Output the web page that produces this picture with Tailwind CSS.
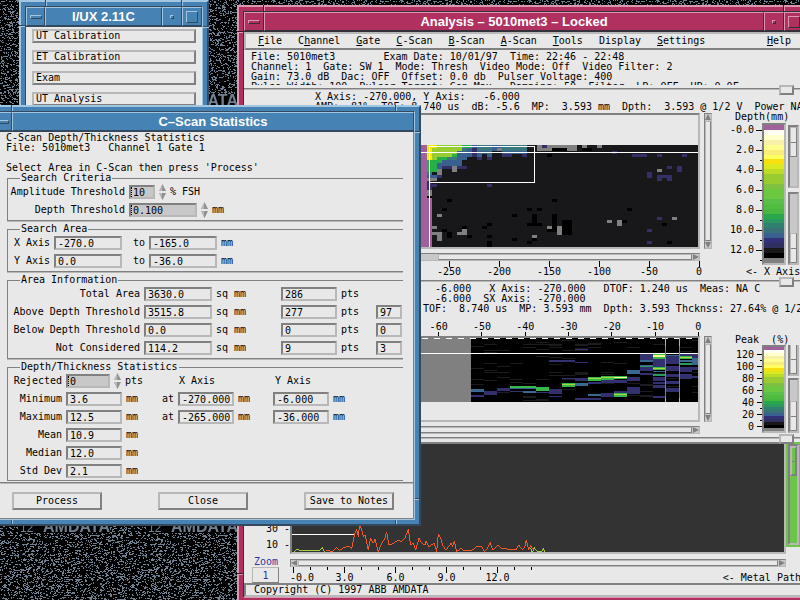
<!DOCTYPE html>
<html lang="en">

<head>
    <meta charset="UTF-8">
    <meta name="viewport" content="width=device-width, initial-scale=1">
    <title>I/UX 2.11C</title>
    <script src="https://cdn.jsdelivr.net/npm/@tailwindcss/browser@4"></script>
</head>

<body class="relative h-screen overflow-hidden bg-black font-['DejaVu_Sans_Mono','Liberation_Mono',monospace] text-[10px] leading-[10px] text-black">
    <!-- Desktop wallpaper -->
    <svg class="absolute inset-0 h-full w-full" shape-rendering="crispEdges" aria-hidden="true">
        <defs>
            <pattern id="wallpaper" y="20" width="128" height="213" patternUnits="userSpaceOnUse">
                <path id="noise" fill="#708090" />
                <text x="20" y="86" fill="#708090" font-family="Liberation Sans" font-size="12">12</text>
                <text x="43" y="86" fill="#708090" font-family="Liberation Sans" font-size="16" font-weight="bold">AMDATA</text>
            </pattern>
        </defs>
        <rect width="100%" height="100%" fill="url(#wallpaper)" />
    </svg>

    <!-- Launcher window -->
    <section class="absolute top-0 left-[19px] w-[190px] border-2 border-t-[#a3c6e0] border-r-[#34495e] border-b-[#34495e] border-l-[#a3c6e0] bg-[#4682b4] p-1">
        <i class="absolute -top-0.5 left-[24px] h-[6px] w-0.5 border-l border-[#34495e] bg-[#a3c6e0]"></i>
        <i class="absolute -top-0.5 right-[24px] h-[6px] w-0.5 border-l border-[#34495e] bg-[#a3c6e0]"></i>
        <i class="absolute top-[23px] -left-0.5 h-0.5 w-[6px] border-t border-[#34495e] bg-[#a3c6e0]"></i>
        <i class="absolute top-[24px] -right-0.5 h-0.5 w-[6px] border-t border-[#34495e] bg-[#a3c6e0]"></i>
        <div class="border border-t-[#34495e] border-r-[#a3c6e0] border-b-[#a3c6e0] border-l-[#34495e]">
            <header class="flex h-5 border-b border-[#34495e] font-['Liberation_Sans',sans-serif] text-[13px] font-bold text-white">
                <button aria-label="Window menu" class="flex w-[19px] items-center justify-center border border-t-[#a3c6e0] border-r-[#34495e] border-b-[#34495e] border-l-[#a3c6e0]">
                    <span class="h-1 w-3 border border-t-[#a3c6e0] border-r-[#34495e] border-b-[#34495e] border-l-[#a3c6e0]"></span>
                </button>
                <h2 class="flex flex-1 items-center justify-center border border-t-[#a3c6e0] border-r-[#34495e] border-b-[#34495e] border-l-[#a3c6e0]">I/UX 2.11C</h2>
                <button aria-label="Minimize" class="flex w-5 items-center justify-center border border-t-[#a3c6e0] border-r-[#34495e] border-b-[#34495e] border-l-[#a3c6e0]">
                    <span class="h-1 w-1 border border-t-[#a3c6e0] border-r-[#34495e] border-b-[#34495e] border-l-[#a3c6e0]"></span>
                </button>
                <button aria-label="Maximize" class="flex w-5 items-center justify-center border border-t-[#a3c6e0] border-r-[#34495e] border-b-[#34495e] border-l-[#a3c6e0]">
                    <span class="h-3 w-3 border border-t-[#a3c6e0] border-r-[#34495e] border-b-[#34495e] border-l-[#a3c6e0]"></span>
                </button>
            </header>
            <div class="flex flex-col gap-[7px] bg-[#e8e8e8] px-1.5 pt-0.5 pb-3">
                <button class="h-[14px] border-2 border-t-[#b8b8b8] border-r-[#808080] border-b-[#808080] border-l-[#b8b8b8] px-0.5 text-left">UT Calibration</button>
                <button class="h-[14px] border-2 border-t-[#b8b8b8] border-r-[#808080] border-b-[#808080] border-l-[#b8b8b8] px-0.5 text-left">ET Calibration</button>
                <button class="h-[14px] border-2 border-t-[#b8b8b8] border-r-[#808080] border-b-[#808080] border-l-[#b8b8b8] px-0.5 text-left">Exam</button>
                <button class="h-[14px] border-2 border-t-[#b8b8b8] border-r-[#808080] border-b-[#808080] border-l-[#b8b8b8] px-0.5 text-left">UT Analysis</button>
            </div>
        </div>
    </section>

    <!-- Analysis window -->
    <section class="absolute top-[5px] -right-[11px] left-[237px] border-2 border-t-[#dc98b0] border-r-[#34303a] border-b-[#34303a] border-l-[#dc98b0] bg-[#b03060] p-1">
        <i class="absolute -top-0.5 left-[24px] h-[6px] w-0.5 border-l border-[#401828] bg-[#dc98b0]"></i>
        <i class="absolute -top-0.5 right-[24px] h-[6px] w-0.5 border-l border-[#401828] bg-[#dc98b0]"></i>
        <i class="absolute top-[24px] -left-0.5 h-0.5 w-[6px] border-t border-[#401828] bg-[#dc98b0]"></i>
        <i class="absolute bottom-[27px] -left-0.5 h-0.5 w-[6px] border-t border-[#401828] bg-[#dc98b0]"></i>
        <div class="border border-t-[#34303a] border-r-[#dc98b0] border-b-[#dc98b0] border-l-[#34303a]">
            <header class="flex h-5 border-b border-[#34303a] font-['Liberation_Sans',sans-serif] text-[13px] font-bold text-white">
                <button aria-label="Window menu" class="flex w-5 items-center justify-center border border-t-[#dc98b0] border-r-[#34303a] border-b-[#34303a] border-l-[#dc98b0]">
                    <span class="h-1 w-3 border border-t-[#dc98b0] border-r-[#34303a] border-b-[#34303a] border-l-[#dc98b0]"></span>
                </button>
                <h2 class="flex flex-1 items-center justify-center border border-t-[#dc98b0] border-r-[#34303a] border-b-[#34303a] border-l-[#dc98b0]">Analysis – 5010met3 – Locked</h2>
                <button aria-label="Minimize" class="flex w-5 items-center justify-center border border-t-[#dc98b0] border-r-[#34303a] border-b-[#34303a] border-l-[#dc98b0]">
                    <span class="h-1 w-1 border border-t-[#dc98b0] border-r-[#34303a] border-b-[#34303a] border-l-[#dc98b0]"></span>
                </button>
                <button aria-label="Maximize" class="flex w-5 items-center justify-center border border-t-[#dc98b0] border-r-[#34303a] border-b-[#34303a] border-l-[#dc98b0]">
                    <span class="h-3 w-3 border border-t-[#dc98b0] border-r-[#34303a] border-b-[#34303a] border-l-[#dc98b0]"></span>
                </button>
            </header>

            <div class="bg-[#e8e8e8]">
                <nav class="flex h-[18px] items-center gap-4 border-2 border-t-[#b8b8b8] border-r-[#808080] border-b-[#808080] border-l-[#b8b8b8] pr-[11px] pl-3">
                    <button><u>F</u>ile</button>
                    <button>C<u>h</u>annel</button>
                    <button><u>G</u>ate</button>
                    <button><u>C</u>-Scan</button>
                    <button><u>B</u>-Scan</button>
                    <button><u>A</u>-Scan</button>
                    <button><u>T</u>ools</button>
                    <button>Display</button>
                    <button><u>S</u>ettings</button>
                    <button class="ml-auto"><u>H</u>elp</button>
                </nav>

                <!-- Exam parameters, the last line is cut by the pane sash -->
                <div class="h-[38px] pt-0.5 pl-[7px]">
                    <pre class="h-[33px] overflow-hidden font-['DejaVu_Sans_Mono','Liberation_Mono',monospace]">File: 5010met3        Exam Date: 10/01/97  Time: 22:46 - 22:48
Channel: 1  Gate: SW 1  Mode: Thresh  Video Mode: Off  Video Filter: 2
Gain: 73.0 dB  Dac: OFF  Offset: 0.0 db  Pulser Voltage: 400
Pulse Width: 100  Pulser Target: Gen Max   Damping: 50  Filter  LP: OFF  HP: 0.0F</pre>
                </div>
                <div class="relative h-0.5 border-t border-[#808080] bg-[#b8b8b8]">
                    <i class="absolute -top-1 right-[10px] h-[10px] w-[15px] border-2 border-t-[#b8b8b8] border-r-[#808080] border-b-[#808080] border-l-[#b8b8b8] bg-[#e8e8e8]"></i>
                </div>

                <!-- C-Scan pane -->
                <div class="h-[190px] pt-0.5">
                    <pre class="h-5 pl-[71px] font-['DejaVu_Sans_Mono','Liberation_Mono',monospace]">X Axis: -270.000, Y Axis:   -6.000
AMP:  81%  TOF: 8.740 us  dB: -5.6  MP:  3.593 mm  Dpth:  3.593 @ 1/2 V  Power NA</pre>
                    <div class="flex">
                        <div class="flex-1 pt-px pl-[44px]">
                            <div class="flex gap-1 pr-3">
                                <div class="h-[136px] flex-1 border-2 border-t-[#808080] border-r-[#b8b8b8] border-b-[#b8b8b8] border-l-[#808080]">
                                    <svg class="h-full w-full" viewBox="290 115 408 132" preserveAspectRatio="none" shape-rendering="crispEdges">
                                        <rect x="290" y="145" width="408" height="102" fill="#18181a" />
                                        <g id="cscan"></g>
                                        <path d="M290 145h137v53h5v49H290z" fill="#a0609c" />
                                        <path d="M290 152.500H698M429.500 247V146.500H534.500V182.500H429" fill="none" stroke="#fff" />
                                    </svg>
                                </div>
                                <div class="flex w-2 flex-col border border-t-[#808080] border-r-[#b8b8b8] border-b-[#b8b8b8] border-l-[#808080] bg-[#c8c8c8]">
                                    <svg class="h-[7px] w-full" viewBox="0 0 6 7"><path d="M3 0L6 6H0z" fill="#808080" /></svg>
                                    <span class="flex-1 border border-t-[#b8b8b8] border-r-[#808080] border-b-[#808080] border-l-[#b8b8b8] bg-[#e8e8e8]"></span>
                                    <svg class="h-[7px] w-full" viewBox="0 0 6 7"><path d="M0 1H6L3 7z" fill="#808080" /></svg>
                                </div>
                            </div>
                            <div class="mt-1 mr-6 flex h-2 border border-t-[#808080] border-r-[#b8b8b8] border-b-[#b8b8b8] border-l-[#808080] bg-[#c8c8c8]">
                                <span class="ml-[149px] flex-1 border border-t-[#b8b8b8] border-r-[#808080] border-b-[#808080] border-l-[#b8b8b8] bg-[#e8e8e8]"></span>
                                <svg class="h-full w-[7px]" viewBox="0 0 7 6"><path d="M1 0V6L7 3z" fill="#808080" /></svg>
                            </div>
                            <div class="flex justify-end text-center">
                                <span class="w-[50px]"><i class="mx-auto block h-1.5 w-px bg-black"></i>-250</span>
                                <span class="w-[50px]"><i class="mx-auto block h-1.5 w-px bg-black"></i>-200</span>
                                <span class="w-[50px]"><i class="mx-auto block h-1.5 w-px bg-black"></i>-150</span>
                                <span class="w-[50px]"><i class="mx-auto block h-1.5 w-px bg-black"></i>-100</span>
                                <span class="w-[50px]"><i class="mx-auto block h-1.5 w-px bg-black"></i>-50</span>
                                <span class="w-[50px]"><i class="mx-auto block h-1.5 w-px bg-black"></i>0</span>
                            </div>
                        </div>
                        <div class="w-20">
                            <p class="h-[11px] pl-[11px]">Depth(mm)</p>
                            <div class="flex h-[142px]">
                                <div class="-mt-[3px] w-[30px] text-right leading-5">
                                    <p>-0.0</p><p>2.0</p><p>4.0</p><p>6.0</p><p>8.0</p><p>10.0</p><p>12.0</p>
                                </div>
                                <svg class="h-full w-2" viewBox="0 0 8 142" shape-rendering="crispEdges">
                                    <path d="M2 7.500h6m-6 20h6m-6 20h6m-6 20h6m-6 20h6m-6 20h6m-6 20h6M6 17.500h2m-2 20h2m-2 20h2m-2 20h2m-2 20h2m-2 20h2m-2 20h2" stroke="#000" />
                                </svg>
                                <div id="depthBar" class="flex w-6 flex-col border-2 border-t-[#808080] border-r-[#b8b8b8] border-b-[#b8b8b8] border-l-[#808080]"></div>
                                <div class="ml-0.5 flex w-[11px] flex-col gap-1 pt-0.5">
                                    <div class="h-[63px] border-2 border-t-[#808080] border-r-[#b8b8b8] border-b-[#b8b8b8] border-l-[#808080] bg-[#c8c8c8]">
                                        <span class="flex h-[30px] items-center border border-t-[#b8b8b8] border-r-[#808080] border-b-[#808080] border-l-[#b8b8b8] bg-[#e8e8e8]"><i class="h-px w-full bg-[#808080]"></i></span>
                                    </div>
                                    <div class="flex flex-1 flex-col justify-end border-2 border-t-[#808080] border-r-[#b8b8b8] border-b-[#b8b8b8] border-l-[#808080] bg-[#c8c8c8]">
                                        <span class="flex h-[30px] items-center border border-t-[#b8b8b8] border-r-[#808080] border-b-[#808080] border-l-[#b8b8b8] bg-[#e8e8e8]"><i class="h-px w-full bg-[#808080]"></i></span>
                                    </div>
                                </div>
                            </div>
                            <p class="pt-0.5 pl-[22px] whitespace-nowrap">&lt;- X Axis</p>
                        </div>
                    </div>
                </div>
                <div class="relative h-0.5 border-t border-[#808080] bg-[#b8b8b8]">
                    <i class="absolute -top-1 right-[10px] h-[10px] w-[15px] border-2 border-t-[#b8b8b8] border-r-[#808080] border-b-[#808080] border-l-[#b8b8b8] bg-[#e8e8e8]"></i>
                </div>

                <!-- B-Scan pane -->
                <div class="h-[155px] pt-0.5">
                    <pre class="h-[30px] pl-[179px] font-['DejaVu_Sans_Mono','Liberation_Mono',monospace]">  -6.000   X Axis: -270.000   DTOF: 1.240 us  Meas: NA C
  -6.000  SX Axis: -270.000
TOF:  8.740 us  MP: 3.593 mm  Dpth: 3.593 Thcknss: 27.64% @ 1/2</pre>
                    <div class="flex">
                        <div class="flex-1 pt-2 pl-[44px]">
                            <div class="mr-1 ml-auto grid w-[303px] grid-cols-7 text-center">
                                <span>-60<i class="mx-auto block h-1 w-px bg-black"></i></span>
                                <span>-50<i class="mx-auto block h-1 w-px bg-black"></i></span>
                                <span>-40<i class="mx-auto block h-1 w-px bg-black"></i></span>
                                <span>-30<i class="mx-auto block h-1 w-px bg-black"></i></span>
                                <span>-20<i class="mx-auto block h-1 w-px bg-black"></i></span>
                                <span>-10<i class="mx-auto block h-1 w-px bg-black"></i></span>
                                <span>0<i class="mx-auto block h-1 w-px bg-black"></i></span>
                            </div>
                            <div class="flex gap-1 pr-3">
                                <div class="h-[86px] flex-1 border-2 border-t-[#808080] border-r-[#b8b8b8] border-b-[#b8b8b8] border-l-[#808080]">
                                    <svg class="h-full w-full" viewBox="290 338 408 82" preserveAspectRatio="none" shape-rendering="crispEdges">
                                        <rect x="290" y="338" width="181" height="64" fill="#808080" />
                                        <rect x="471" y="338" width="227" height="64" fill="#000" />
                                        <g id="bscan"></g>
                                        <path d="M290 338.500H698" stroke="#fff" stroke-dasharray="6 6" />
                                        <path d="M290 353.500H698" stroke="#fff" />
                                        <path d="M665.500 338V402M679.500 338V402" stroke="#a0d040" />
                                        <path d="M665.500 346V398M679.500 346V398" stroke="#f05a28" />
                                    </svg>
                                </div>
                                <div class="flex w-2 flex-col border border-t-[#808080] border-r-[#b8b8b8] border-b-[#b8b8b8] border-l-[#808080] bg-[#c8c8c8]">
                                    <svg class="h-[7px] w-full" viewBox="0 0 6 7"><path d="M3 0L6 6H0z" fill="#808080" /></svg>
                                    <span class="flex-1 border border-t-[#b8b8b8] border-r-[#808080] border-b-[#808080] border-l-[#b8b8b8] bg-[#e8e8e8]"></span>
                                    <svg class="h-[7px] w-full" viewBox="0 0 6 7"><path d="M0 1H6L3 7z" fill="#808080" /></svg>
                                </div>
                            </div>
                            <div class="mt-1 mr-6 flex h-2 border border-t-[#808080] border-r-[#b8b8b8] border-b-[#b8b8b8] border-l-[#808080] bg-[#c8c8c8]">
                                <span class="ml-[7px] flex-1 border border-t-[#b8b8b8] border-r-[#808080] border-b-[#808080] border-l-[#b8b8b8] bg-[#e8e8e8]"></span>
                                <svg class="h-full w-[7px]" viewBox="0 0 7 6"><path d="M1 0V6L7 3z" fill="#808080" /></svg>
                            </div>
                        </div>
                        <div class="w-20 pt-[21px]">
                            <pre class="pl-[11px] font-['DejaVu_Sans_Mono','Liberation_Mono',monospace]">Peak  (%)</pre>
                            <div class="flex h-[88px]">
                                <div class="w-[30px] pt-1 text-right leading-3">
                                    <p>120</p><p>100</p><p>80</p><p>60</p><p>40</p><p>20</p><p>0</p>
                                </div>
                                <svg class="h-full w-2" viewBox="0 0 8 88" shape-rendering="crispEdges">
                                    <path d="M3 9.500h5m-5 12h5m-5 12h5m-5 12h5m-5 12h5m-5 12h5m-5 12h5M6 15.500h2m-2 12h2m-2 12h2m-2 12h2m-2 12h2m-2 12h2" stroke="#000" />
                                </svg>
                                <div id="peakBar" class="flex w-6 flex-col border-2 border-t-[#808080] border-r-[#b8b8b8] border-b-[#b8b8b8] border-l-[#808080]"></div>
                                <div class="ml-0.5 flex w-[11px] flex-col gap-0.5">
                                    <div class="h-[31px] border-2 border-t-0 border-r-[#b8b8b8] border-b-[#b8b8b8] border-l-[#808080] bg-[#c8c8c8]">
                                        <span class="flex h-full items-center border border-t-0 border-r-[#808080] border-b-[#808080] border-l-[#b8b8b8] bg-[#e8e8e8]"><i class="h-px w-full bg-[#808080]"></i></span>
                                    </div>
                                    <div class="flex flex-1 flex-col justify-end border-2 border-t-[#808080] border-r-[#b8b8b8] border-b-[#b8b8b8] border-l-[#808080] bg-[#c8c8c8]">
                                        <span class="flex h-[30px] items-center border border-t-[#b8b8b8] border-r-[#808080] border-b-[#808080] border-l-[#b8b8b8] bg-[#e8e8e8]"><i class="h-px w-full bg-[#808080]"></i></span>
                                    </div>
                                </div>
                            </div>
                        </div>
                    </div>
                </div>
                <div class="relative h-0.5 border-t border-[#808080] bg-[#b8b8b8]">
                    <i class="absolute -top-1 right-[10px] z-10 h-[10px] w-[15px] border-2 border-t-[#b8b8b8] border-r-[#808080] border-b-[#808080] border-l-[#b8b8b8] bg-[#e8e8e8]"></i>
                </div>

                <!-- A-Scan pane -->
                <div class="pt-[3px]">
                    <div class="flex h-[112px]">
                        <div class="flex w-[46px] flex-col justify-end pb-px text-right leading-4">
                            <p>90 -</p><p>70 -</p><p>50 -</p><p>30 -</p><p>10 -</p>
                        </div>
                        <div class="flex-1 border-2 border-t-[#808080] border-r-[#b8b8b8] border-b-[#b8b8b8] border-l-[#808080] bg-[#333]">
                            <svg class="h-full w-full" viewBox="292 444 492 108" preserveAspectRatio="none" fill="none" shape-rendering="crispEdges">
                                <path d="M292 534.500H354" stroke="#fff" />
                                <g transform="translate(0 430) scale(.3333)" stroke-width="3">
                                    <path stroke="#a0d040" d="M877 368l8-4 5-7 10 5 10-2 20 2 30-2 7-8 5 10 5 5M1585 360l7-7 5 14 6-15 7 12 15 0 5-9 6 14" />
                                    <path stroke="#f05a28" d="M977 362l23 2 10-12 8 10 12-8 15-6 10 8 8-41 7-18 5 23 4-40 6 20 5 20 6-5 9 45 7-35 8 15 5-12 10 37 10-25 10-15 5-20 7 40 13-5 15-10 10 5 10-10 10-27 7 47 8-5 7 20 10-35 8 15 10 5 3-12 8 17 17-10 7 25 5-53 8 13 5 20 10 15 15-20 5 10 5-17 7 32 13-10 10 8 25-3 10-10h18l7 15 10-10 8-18 7 23 18-15 7 10 45 5 8-15 12 15 7-10 4-20 7 30 6-15 8 15" />
                                </g>
                            </svg>
                        </div>
                        <div class="h-[105px] w-[18px] bg-[#6cc44a] px-0.5 py-0.5">
                            <div class="h-full w-[11px] border-2 border-t-[#808080] border-r-[#b8b8b8] border-b-[#b8b8b8] border-l-[#808080]">
                                <span class="flex h-[30px] items-center border-2 border-t-[#b8b8b8] border-r-[#808080] border-b-[#808080] border-l-[#b8b8b8]"><i class="h-px w-full bg-[#808080]"></i></span>
                            </div>
                        </div>
                    </div>
                    <div class="flex h-[29px]">
                        <div class="w-[46px] pt-[3px] pl-2 text-[#30309c]">
                            <label for="zoom" class="block pl-0.5">Zoom</label>
                            <input id="zoom" value="1" class="block h-4 w-[27px] border border-t-[#b8b8b8] border-r-[#808080] border-b-[#808080] border-l-[#b8b8b8] text-center">
                        </div>
                        <div class="flex-1 pt-[5px]">
                            <div class="mr-[18px] flex h-2 border border-t-[#808080] border-r-[#b8b8b8] border-b-[#b8b8b8] border-l-[#808080] bg-[#c8c8c8]">
                                <svg class="h-full w-[7px]" viewBox="0 0 7 6"><path d="M6 0V6L0 3z" fill="#808080" /></svg>
                                <span class="flex-1 border border-t-[#b8b8b8] border-r-[#808080] border-b-[#808080] border-l-[#b8b8b8] bg-[#e8e8e8]"></span>
                                <svg class="h-full w-[7px]" viewBox="0 0 7 6"><path d="M1 0V6L7 3z" fill="#808080" /></svg>
                            </div>
                            <svg class="block h-[6px] w-[260px]" viewBox="290 567 260 6" shape-rendering="crispEdges">
                                <path d="M293.500 567v6m51-6v6m51-6v6m51-6v6m51-6v6M310.500 567v3m17-3v3m34-3v3m17-3v3m34-3v3m17-3v3m34-3v3m17-3v3m34-3v3m17-3v3" stroke="#000" />
                            </svg>
                            <div class="flex pr-[3px] whitespace-nowrap">
                                <span class="w-[29px]">-0.0</span>
                                <span class="w-[51px] text-center">3.0</span>
                                <span class="w-[51px] text-center">6.0</span>
                                <span class="w-[51px] text-center">9.0</span>
                                <span class="w-[51px] text-center">12.0</span>
                                <span class="ml-auto">&lt;- Metal Path</span>
                            </div>
                        </div>
                    </div>
                </div>
                <footer class="border-2 border-t-[#808080] border-r-[#b8b8b8] border-b-[#b8b8b8] border-l-[#808080] pl-2">Copyright (C) 1997 ABB AMDATA</footer>
            </div>
        </div>
    </section>

    <!-- Statistics dialog -->
    <section class="absolute top-[105px] -left-[14px] w-[435px] border-2 border-t-[#a3c6e0] border-r-[#34495e] border-b-[#34495e] border-l-[#a3c6e0] bg-[#4682b4] p-1">
        <i class="absolute -top-0.5 left-[23px] h-[6px] w-0.5 border-l border-[#34495e] bg-[#a3c6e0]"></i>
        <i class="absolute -top-0.5 right-[22px] h-[6px] w-0.5 border-l border-[#34495e] bg-[#a3c6e0]"></i>
        <i class="absolute top-[24px] -right-px h-0.5 w-[5px] border-t border-[#34495e] bg-[#a3c6e0]"></i>
        <i class="absolute right-0 bottom-[24px] h-0.5 w-1 border-t border-[#34495e] bg-[#a3c6e0]"></i>
        <i class="absolute bottom-0 left-[23px] h-1 w-0.5 border-l border-[#34495e] bg-[#a3c6e0]"></i>
        <i class="absolute right-[22px] bottom-0 h-1 w-0.5 border-l border-[#34495e] bg-[#a3c6e0]"></i>
        <form class="border border-t-[#34495e] border-r-[#a3c6e0] border-b-[#a3c6e0] border-l-[#34495e]">
            <header class="flex h-5 border-b border-[#34495e] font-['Liberation_Sans',sans-serif] text-[13px] font-bold text-white">
                <button type="button" aria-label="Window menu" class="flex w-[19px] items-center justify-center border border-t-[#a3c6e0] border-r-[#34495e] border-b-[#34495e] border-l-[#a3c6e0]">
                    <span class="h-1 w-3 border border-t-[#a3c6e0] border-r-[#34495e] border-b-[#34495e] border-l-[#a3c6e0]"></span>
                </button>
                <h2 class="flex flex-1 items-center justify-center border border-t-[#a3c6e0] border-r-[#34495e] border-b-[#34495e] border-l-[#a3c6e0]">C–Scan Statistics</h2>
            </header>

            <div class="border-r border-[#808080] bg-[#e8e8e8] pt-px">
                <div class="flex flex-col gap-[3px] pr-[10px] pl-[14px]">
                    <pre class="-mb-[3px] -ml-px h-10 font-['DejaVu_Sans_Mono','Liberation_Mono',monospace]">C-Scan Depth/Thickness Statistics
File: 5010met3   Channel 1 Gate 1

Select Area in C-Scan then press 'Process'</pre>

                    <fieldset class="border-y border-l border-[#808080] pb-[3px] shadow-[0_1px_0_#b8b8b8]">
                        <legend class="ml-3 px-px">Search Criteria</legend>
                        <div class="flex flex-col gap-1 pt-0.5">
                            <div class="flex h-[14px] items-center gap-1">
                                <label for="amp" class="w-[117px] text-right">Amplitude Threshold</label>
                                <span class="relative">
                                    <input id="amp" value="10" class="block h-[14px] w-[26px] border-2 border-t-[#808080] border-r-[#b8b8b8] border-b-[#b8b8b8] border-l-[#808080] bg-[#c8c8c8] px-0.5">
                                    <i class="absolute top-0.5 left-0.5 h-[10px] w-px border-l border-dotted border-black"></i>
                                </span>
                                <svg class="h-4 w-[7px]" viewBox="0 0 7 16"><path d="M3.500 0L7 7H0zM0 9H7L3.500 16z" fill="#909090" /><path d="M3.500 0L0 7h3zM0 9h3v6z" fill="#b8b8b8" /></svg>
                                <span>% FSH</span>
                            </div>
                            <div class="flex h-[14px] items-center gap-1">
                                <label for="depth" class="w-[117px] text-right">Depth Threshold</label>
                                <span class="relative">
                                    <input id="depth" value="0.100" class="block h-[14px] w-[68px] border-2 border-t-[#808080] border-r-[#b8b8b8] border-b-[#b8b8b8] border-l-[#808080] bg-[#c8c8c8] px-0.5">
                                    <i class="absolute top-0.5 left-0.5 h-[10px] w-px border-l border-dotted border-black"></i>
                                </span>
                                <svg class="h-4 w-[7px]" viewBox="0 0 7 16"><path d="M3.500 0L7 7H0zM0 9H7L3.500 16z" fill="#909090" /><path d="M3.500 0L0 7h3zM0 9h3v6z" fill="#b8b8b8" /></svg>
                                <span>mm</span>
                            </div>
                        </div>
                    </fieldset>

                    <fieldset class="border-y border-l border-[#808080] pb-[3px] shadow-[0_1px_0_#b8b8b8]">
                        <legend class="ml-3 px-px">Search Area</legend>
                        <div class="flex flex-col gap-1 pt-0.5">
                            <div class="flex h-[14px] items-center gap-1">
                                <label for="x1" class="w-[42px] text-right">X Axis</label>
                                <input id="x1" value="-270.0" class="h-[14px] w-[68px] border-2 border-t-[#808080] border-r-[#b8b8b8] border-b-[#b8b8b8] border-l-[#808080] px-0.5">
                                <label for="x2" class="w-[19px] text-right">to</label>
                                <input id="x2" value="-165.0" class="h-[14px] w-[68px] border-2 border-t-[#808080] border-r-[#b8b8b8] border-b-[#b8b8b8] border-l-[#808080] px-0.5">
                                <span>mm</span>
                            </div>
                            <div class="flex h-[14px] items-center gap-1">
                                <label for="y1" class="w-[42px] text-right">Y Axis</label>
                                <input id="y1" value="0.0" class="h-[14px] w-[68px] border-2 border-t-[#808080] border-r-[#b8b8b8] border-b-[#b8b8b8] border-l-[#808080] px-0.5">
                                <label for="y2" class="w-[19px] text-right">to</label>
                                <input id="y2" value="-36.0" class="h-[14px] w-[68px] border-2 border-t-[#808080] border-r-[#b8b8b8] border-b-[#b8b8b8] border-l-[#808080] px-0.5">
                                <span>mm</span>
                            </div>
                        </div>
                    </fieldset>

                    <fieldset class="border-y border-l border-[#808080] pb-[3px] shadow-[0_1px_0_#b8b8b8]">
                        <legend class="ml-3 px-px">Area Information</legend>
                        <div class="flex flex-col gap-1 pt-0.5">
                            <div class="flex h-[14px] items-center gap-1">
                                <label for="total" class="w-[132px] text-right">Total Area</label>
                                <input id="total" value="3630.0" class="h-[14px] w-[68px] border-2 border-t-[#808080] border-r-[#b8b8b8] border-b-[#b8b8b8] border-l-[#808080] px-0.5">
                                <span class="w-[61px]">sq mm</span>
                                <input aria-label="Total points" value="286" class="h-[14px] w-[56px] border-2 border-t-[#808080] border-r-[#b8b8b8] border-b-[#b8b8b8] border-l-[#808080] px-0.5">
                                <span class="w-[31px]">pts</span>
                            </div>
                            <div class="flex h-[14px] items-center gap-1">
                                <label for="above" class="w-[132px] text-right">Above Depth Threshold</label>
                                <input id="above" value="3515.8" class="h-[14px] w-[68px] border-2 border-t-[#808080] border-r-[#b8b8b8] border-b-[#b8b8b8] border-l-[#808080] px-0.5">
                                <span class="w-[61px]">sq mm</span>
                                <input aria-label="Above points" value="277" class="h-[14px] w-[56px] border-2 border-t-[#808080] border-r-[#b8b8b8] border-b-[#b8b8b8] border-l-[#808080] px-0.5">
                                <span class="w-[31px]">pts</span>
                                <input aria-label="Above percent" value="97" class="h-[14px] w-[26px] border-2 border-t-[#808080] border-r-[#b8b8b8] border-b-[#b8b8b8] border-l-[#808080] px-0.5">
                            </div>
                            <div class="flex h-[14px] items-center gap-1">
                                <label for="below" class="w-[132px] text-right">Below Depth Threshold</label>
                                <input id="below" value="0.0" class="h-[14px] w-[68px] border-2 border-t-[#808080] border-r-[#b8b8b8] border-b-[#b8b8b8] border-l-[#808080] px-0.5">
                                <span class="w-[61px]">sq mm</span>
                                <input aria-label="Below points" value="0" class="h-[14px] w-[56px] border-2 border-t-[#808080] border-r-[#b8b8b8] border-b-[#b8b8b8] border-l-[#808080] px-0.5">
                                <span class="w-[31px]">pts</span>
                                <input aria-label="Below percent" value="0" class="h-[14px] w-[26px] border-2 border-t-[#808080] border-r-[#b8b8b8] border-b-[#b8b8b8] border-l-[#808080] px-0.5">
                            </div>
                            <div class="flex h-[14px] items-center gap-1">
                                <label for="not" class="w-[132px] text-right">Not Considered</label>
                                <input id="not" value="114.2" class="h-[14px] w-[68px] border-2 border-t-[#808080] border-r-[#b8b8b8] border-b-[#b8b8b8] border-l-[#808080] px-0.5">
                                <span class="w-[61px]">sq mm</span>
                                <input aria-label="Not considered points" value="9" class="h-[14px] w-[56px] border-2 border-t-[#808080] border-r-[#b8b8b8] border-b-[#b8b8b8] border-l-[#808080] px-0.5">
                                <span class="w-[31px]">pts</span>
                                <input aria-label="Not considered percent" value="3" class="h-[14px] w-[26px] border-2 border-t-[#808080] border-r-[#b8b8b8] border-b-[#b8b8b8] border-l-[#808080] px-0.5">
                            </div>
                        </div>
                    </fieldset>

                    <fieldset class="border-y border-l border-[#808080] pb-0.5">
                        <legend class="ml-3 px-px">Depth/Thickness Statistics</legend>
                        <div class="flex flex-col gap-1 pt-0.5">
                            <div class="flex h-[14px] items-center gap-1">
                                <label for="rejected" class="w-[54px] text-right">Rejected</label>
                                <span class="relative">
                                    <input id="rejected" value="0" class="block h-[14px] w-[44px] border-2 border-t-[#808080] border-r-[#b8b8b8] border-b-[#b8b8b8] border-l-[#808080] bg-[#c8c8c8] px-0.5">
                                    <i class="absolute top-0.5 left-0.5 h-[10px] w-px border-l border-dotted border-black"></i>
                                </span>
                                <svg class="h-4 w-[7px]" viewBox="0 0 7 16"><path d="M3.500 0L7 7H0zM0 9H7L3.500 16z" fill="#909090" /><path d="M3.500 0L0 7h3zM0 9h3v6z" fill="#b8b8b8" /></svg>
                                <span class="w-[50px]">pts</span>
                                <span class="w-[92px]">X Axis</span>
                                <span>Y Axis</span>
                            </div>
                            <div class="flex h-[14px] items-center gap-1">
                                <label for="min" class="w-[54px] text-right">Minimum</label>
                                <input id="min" value="3.6" class="h-[14px] w-[56px] border-2 border-t-[#808080] border-r-[#b8b8b8] border-b-[#b8b8b8] border-l-[#808080] px-0.5">
                                <span>mm</span>
                                <label for="minX" class="w-8 text-right">at</label>
                                <input id="minX" value="-270.000" class="h-[14px] w-[56px] border-2 border-t-[#808080] border-r-[#b8b8b8] border-b-[#b8b8b8] border-l-[#808080] px-0.5">
                                <span class="w-[31px]">mm</span>
                                <input aria-label="Minimum Y" value="-6.000" class="h-[14px] w-[56px] border-2 border-t-[#808080] border-r-[#b8b8b8] border-b-[#b8b8b8] border-l-[#808080] px-0.5">
                                <span>mm</span>
                            </div>
                            <div class="flex h-[14px] items-center gap-1">
                                <label for="max" class="w-[54px] text-right">Maximum</label>
                                <input id="max" value="12.5" class="h-[14px] w-[56px] border-2 border-t-[#808080] border-r-[#b8b8b8] border-b-[#b8b8b8] border-l-[#808080] px-0.5">
                                <span>mm</span>
                                <label for="maxX" class="w-8 text-right">at</label>
                                <input id="maxX" value="-265.000" class="h-[14px] w-[56px] border-2 border-t-[#808080] border-r-[#b8b8b8] border-b-[#b8b8b8] border-l-[#808080] px-0.5">
                                <span class="w-[31px]">mm</span>
                                <input aria-label="Maximum Y" value="-36.000" class="h-[14px] w-[56px] border-2 border-t-[#808080] border-r-[#b8b8b8] border-b-[#b8b8b8] border-l-[#808080] px-0.5">
                                <span>mm</span>
                            </div>
                            <div class="flex h-[14px] items-center gap-1">
                                <label for="mean" class="w-[54px] text-right">Mean</label>
                                <input id="mean" value="10.9" class="h-[14px] w-[56px] border-2 border-t-[#808080] border-r-[#b8b8b8] border-b-[#b8b8b8] border-l-[#808080] px-0.5">
                                <span>mm</span>
                            </div>
                            <div class="flex h-[14px] items-center gap-1">
                                <label for="median" class="w-[54px] text-right">Median</label>
                                <input id="median" value="12.0" class="h-[14px] w-[56px] border-2 border-t-[#808080] border-r-[#b8b8b8] border-b-[#b8b8b8] border-l-[#808080] px-0.5">
                                <span>mm</span>
                            </div>
                            <div class="flex h-[14px] items-center gap-1">
                                <label for="stddev" class="w-[54px] text-right">Std Dev</label>
                                <input id="stddev" value="2.1" class="h-[14px] w-[56px] border-2 border-t-[#808080] border-r-[#b8b8b8] border-b-[#b8b8b8] border-l-[#808080] px-0.5">
                                <span>mm</span>
                            </div>
                        </div>
                    </fieldset>
                </div>

                <div class="mt-px flex justify-between border-y border-[#808080] pt-[9px] pr-[19px] pb-2 pl-[19px] shadow-[inset_0_1px_0_#b8b8b8]">
                    <button type="button" class="h-[18px] w-[90px] border-2 border-t-[#b8b8b8] border-r-[#808080] border-b-[#808080] border-l-[#b8b8b8]">Process</button>
                    <button type="button" class="h-[18px] w-[90px] border-2 border-t-[#b8b8b8] border-r-[#808080] border-b-[#808080] border-l-[#b8b8b8]">Close</button>
                    <button type="button" class="h-[18px] w-[90px] border-2 border-t-[#b8b8b8] border-r-[#808080] border-b-[#808080] border-l-[#b8b8b8] whitespace-nowrap">Save to Notes</button>
                </div>
            </div>
        </form>
    </section>

    <script>
        // Small repeatable random generator, so the speckle is the same on each load
        let seed = 7;
        function rnd() {
            seed = (seed * 16807) % 2147483647;
            return seed / 2147483647;
        }

        // Speckle of the wallpaper tile, left clear behind the lettering
        let dots = '';
        for (let y = 0; y < 213; y++) {
            for (let x = 0; x < 128; x++) {
                const lettering = y > 73 && y < 87 && x > 17 && x < 110;
                if (rnd() < 0.22 && !lettering) dots += `M${x} ${y}h${rnd() < 0.3 ? 2 : 1}v1H${x}z`;
            }
        }
        document.getElementById('noise').setAttribute('d', dots);

        // Colour scales, top to bottom
        const scale = ['#a0609c', '#fdfcf0', '#ffffcc', '#f6f0a8', '#ffff90', '#faec78', '#ffff60', '#f8e010', '#dce820', '#bcdc28',
            '#98cc30', '#98cc30', '#80c040', '#6cc840', '#6cc840', '#58c048', '#50bc40', '#48b840', '#28a848', '#2a9860',
            '#308070', '#3a7078', '#3a6090', '#33307a', '#303060', '#181818', '#000', '#808080'];
        const stripes = scale.map(c => `<div class="flex-1" style="background:${c}"></div>`).join('');
        document.getElementById('depthBar').innerHTML = stripes;
        document.getElementById('peakBar').innerHTML = stripes;

        // C-Scan cells are 5x3, listed as column, row, width, height
        const cells = {
            '#98cc30': [[0, 0, 7, 3], [1, 3, 4, 1], [1, 4, 1, 1]],
            '#f0ec10': [[0, 1, 1, 4], [0, 0, 2, 1]],
            '#28b048': [[7, 0, 2, 1], [5, 3, 1, 1], [2, 4, 2, 1], [0, 5, 2, 4], [2, 5, 1, 1]],
            '#3a7880': [[7, 1, 1, 1], [10, 0, 3, 2], [15, 0, 5, 2], [4, 4, 2, 1], [0, 9, 1, 1]],
            '#3a6090': [[9, 0, 1, 1], [8, 1, 1, 2], [6, 2, 2, 2], [13, 0, 2, 1], [13, 1, 1, 1], [8, 3, 1, 1], [10, 3, 1, 1], [12, 3, 1, 1], [6, 4, 2, 1], [3, 5, 4, 1], [2, 6, 5, 1], [2, 7, 1, 1], [0, 10, 2, 1], [15, 2, 5, 1], [10, 2, 3, 1]],
            '#333068': [[9, 1, 1, 3], [15, 3, 2, 1], [19, 3, 1, 1], [10, 4, 1, 1], [12, 4, 1, 1], [3, 7, 2, 1], [6, 7, 2, 1], [2, 10, 1, 1], [0, 12, 1, 3], [1, 13, 1, 1], [12, 13, 1, 1], [23, 0, 1, 1],
                [37, 2, 1, 1], [41, 3, 3, 1], [46, 3, 1, 1], [51, 3, 1, 1], [48, 7, 1, 1], [50, 7, 1, 2], [44, 9, 1, 2], [46, 10, 3, 1], [46, 11, 1, 1], [48, 11, 1, 1], [46, 24, 1, 1], [44, 28, 1, 1], [44, 32, 1, 1]],
            '#808080': [[14, 1, 1, 1], [22, 0, 1, 1], [24, 0, 4, 1], [22, 1, 3, 1], [28, 0, 2, 2], [31, 0, 1, 1], [34, 0, 1, 1], [5, 7, 1, 2], [2, 8, 1, 2], [1, 11, 1, 1], [0, 11, 1, 1], [0, 15, 1, 2],
                [2, 23, 1, 1], [36, 25, 1, 1], [1, 27, 1, 1], [7, 28, 1, 1], [6, 29, 2, 1], [1, 29, 2, 1], [2, 30, 1, 2], [21, 30, 1, 1], [24, 27, 1, 1], [26, 27, 1, 3], [46, 8, 1, 1], [49, 24, 1, 1], [38, 25, 1, 2]],
            '#000': [[25, 1, 3, 1], [31, 1, 2, 1], [24, 3, 1, 1], [0, 17, 1, 1], [4, 18, 1, 1], [25, 18, 1, 1], [3, 21, 1, 1], [20, 21, 1, 1], [22, 21, 1, 1], [17, 23, 1, 1], [21, 23, 1, 4], [20, 26, 3, 1], [25, 23, 1, 6], [27, 25, 2, 5], [24, 28, 2, 1],
                [12, 26, 1, 1], [11, 27, 1, 1], [3, 28, 1, 1], [4, 29, 1, 2], [8, 30, 1, 1], [12, 30, 1, 1], [12, 32, 1, 2], [17, 31, 1, 1], [21, 31, 1, 1], [20, 32, 1, 1], [7, 27, 1, 1], [40, 21, 1, 1], [39, 25, 1, 1], [47, 26, 1, 1], [48, 32, 1, 1]]
        };
        let out = '';
        for (const color in cells) {
            const d = cells[color].map(([c, r, w, h]) => `M${427 + c * 5} ${145 + r * 3}h${w * 5}v${h * 3}h${-w * 5}z`).join('');
            out += `<path fill="${color}" d="${d}"/>`;
        }
        document.getElementById('cscan').innerHTML = out;

        // B-Scan columns are 13 wide: column, y, columns, height
        out = '';
        for (let i = 0; i < 110; i++) {
            out += `<rect fill="#1c1c1e" x="${471 + Math.floor(rnd() * 18) * 13}" y="${339 + Math.floor(rnd() * 62)}" width="13" height="1"/>`;
        }
        const echoes = {
            '#333070': [[0, 395, 1, 2], [1, 391, 1, 4], [2, 388, 1, 3], [3, 391, 1, 1], [5, 392, 1, 1], [6, 389, 1, 5], [6, 396, 1, 1], [6, 360, 2, 2], [7, 378, 1, 1], [8, 349, 1, 1], [8, 362, 1, 1], [8, 398, 1, 2], [8, 378, 1, 3], [9, 382, 1, 2], [9, 398, 1, 2], [10, 379, 1, 4], [10, 393, 1, 4],
                [11, 380, 1, 3], [11, 391, 1, 2], [12, 377, 1, 4], [12, 387, 1, 7], [13, 354, 1, 6], [13, 367, 1, 4], [13, 373, 1, 2], [14, 359, 1, 8], [14, 377, 1, 4], [14, 382, 1, 2], [14, 385, 1, 3], [14, 396, 1, 2], [15, 355, 1, 9], [15, 366, 1, 5], [15, 374, 1, 3], [15, 381, 1, 3], [15, 388, 1, 4],
                [16, 354, 1, 3], [16, 367, 1, 5], [16, 374, 1, 5], [17, 354, 1, 4], [17, 367, 1, 3], [17, 376, 1, 2]],
            '#3a6890': [[0, 389, 1, 3], [3, 388, 2, 1], [4, 391, 1, 2], [8, 383, 1, 3], [9, 394, 1, 2], [12, 370, 1, 4], [13, 360, 1, 2], [13, 365, 1, 2], [14, 371, 1, 1], [15, 355, 1, 1], [17, 358, 1, 7], [16, 360, 1, 2]],
            '#2a9860': [[9, 380, 1, 1], [14, 374, 1, 2], [13, 366, 1, 1], [16, 363, 1, 2]],
            '#38b848': [[3, 386, 2, 2], [5, 387, 1, 4], [7, 383, 1, 4], [9, 377, 1, 4], [10, 376, 1, 4], [11, 376, 1, 3], [11, 393, 1, 4], [14, 354, 1, 5], [14, 367, 1, 3], [16, 356, 1, 3]],
            '#a8d840': [[7, 384, 1, 1], [9, 378, 1, 1], [10, 377, 1, 1], [11, 394, 1, 1], [14, 368, 1, 1], [16, 357, 1, 1]],
            '#f4f890': [[11, 377, 1, 1], [14, 355, 1, 2]]
        };
        for (const color in echoes) {
            const d = echoes[color].map(([c, y, w, h]) => `M${471 + c * 13} ${y}h${w * 13}v${h}h${-w * 13}z`).join('');
            out += `<path fill="${color}" d="${d}"/>`;
        }
        document.getElementById('bscan').innerHTML = out;
    </script>
</body>

</html>
